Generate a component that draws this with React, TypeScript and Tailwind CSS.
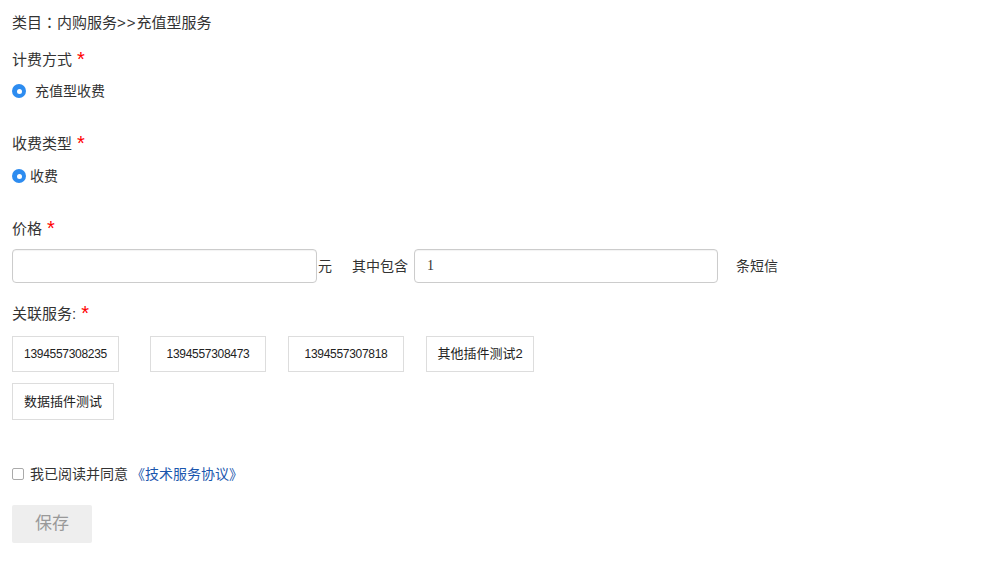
import { useState } from 'react';

const services = [
  { name: '1394557308235', cls: 'w-[107px] mr-[31px] text-[12px] tracking-[-0.3px]' },
  { name: '1394557308473', cls: 'w-[116px] mr-[22px] text-[12px] tracking-[-0.3px]' },
  { name: '1394557307818', cls: 'w-[116px] mr-[22px] text-[12px] tracking-[-0.3px]' },
  { name: '其他插件测试2', cls: 'w-[108px] text-[13px]' },
];

function Radio({ label, gap }: { label: string; gap: string }) {
  return (
    <label className="flex items-center h-5 text-[14px] text-[#333]">
      <span className="w-[14px] h-[14px] rounded-full bg-[#2d8cf0] flex items-center justify-center">
        <span className="w-[5px] h-[5px] rounded-full bg-white" />
      </span>
      <span className={gap}>{label}</span>
    </label>
  );
}

function Star() {
  return <span className="ml-[5px] text-[#f00] text-[20px] leading-none relative top-[-1px]">*</span>;
}

function Label({ text }: { text: string }) {
  return (
    <div className="h-5 leading-5 text-[15px] text-[#333] flex items-center">
      {text}
      <Star />
    </div>
  );
}

export default function App() {
  const [agree, setAgree] = useState(false);

  return (
    <div
      className="min-h-[579px] bg-white pl-3 pt-3"
      style={{ fontFamily: '"Liberation Sans", "Noto Sans CJK SC", sans-serif' }}
    >
      <div className="h-5 leading-5 text-[15px] text-[#333]">
        类目<span style={{ fontFamily: '"Noto Sans CJK TC", sans-serif' }}>：</span>内购服务
        <span className="tracking-[1px]">&gt;&gt;</span>充值型服务
      </div>

      <div className="mt-[18px]">
        <Label text="计费方式" />
      </div>
      <div className="mt-[11px]">
        <Radio label="充值型收费" gap="ml-[9px]" />
      </div>

      <div className="mt-[33px]">
        <Label text="收费类型" />
      </div>
      <div className="mt-3">
        <Radio label="收费" gap="ml-[4px]" />
      </div>

      <div className="mt-[33px]">
        <Label text="价格" />
      </div>
      <div className="mt-[10px] flex items-center text-[14px] text-[#333]">
        <input className="w-[305px] h-[34px] border border-[#ccc] rounded-[4px] px-3 outline-none shadow-[inset_0_1px_1px_rgba(0,0,0,0.05)]" />
        <span className="ml-[1px]">元</span>
        <span className="ml-5">其中包含</span>
        <input
          defaultValue="1"
          className="ml-[6px] w-[304px] h-[34px] border border-[#ccc] rounded-[4px] px-3 outline-none text-[14px] shadow-[inset_0_1px_1px_rgba(0,0,0,0.05)]"
          style={{ fontFamily: '"Liberation Serif", serif' }}
        />
        <span className="ml-[18px]">条短信</span>
      </div>

      <div className="mt-[21px] h-5 leading-5 text-[15px] text-[#333] flex items-center">
        关联服务:
        <Star />
      </div>
      <div className="mt-3 flex">
        {services.map((s) => (
          <div
            key={s.name}
            className={`${s.cls} h-[36px] border border-[#ddd] flex items-center justify-center text-[#222]`}
          >
            {s.name}
          </div>
        ))}
      </div>
      <div className="mt-[11px] flex">
        <div className="w-[102px] h-[37px] border border-[#ddd] flex items-center justify-center text-[13px] text-[#222]">
          数据插件测试
        </div>
      </div>

      <label className="mt-[44px] flex items-center h-5 text-[14px] text-[#333]">
        <input
          type="checkbox"
          checked={agree}
          onChange={(e) => setAgree(e.target.checked)}
          className="appearance-none w-[12px] h-[12px] border border-[#aaa] rounded-[2px] bg-white"
        />
        <span className="ml-[6px]">我已阅读并同意</span>
        <a className="ml-[3px] text-[#1a56ad]">《技术服务协议》</a>
      </label>

      <button className="mt-[21px] w-[80px] h-[38px] rounded-[2px] bg-[#eee] text-[17px] text-[#999]">
        保存
      </button>
    </div>
  );
}
